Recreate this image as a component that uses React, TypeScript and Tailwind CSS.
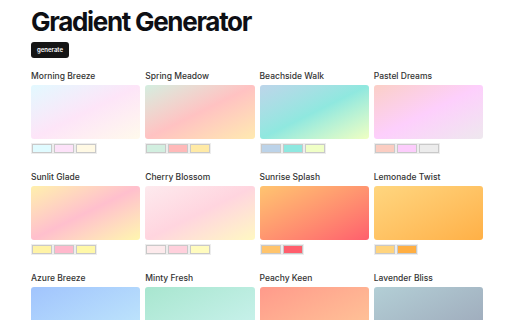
const gradients = [
  {
    name: 'Morning Breeze',
    bg: 'bg-linear-to-br from-[#e2f9ff] via-[#fde5f8] to-[#fffaec]',
    colors: ['bg-[#e0fbff]', 'bg-[#fde2f9]', 'bg-[#fff9e4]'],
  },
  {
    name: 'Spring Meadow',
    bg: 'bg-linear-to-br from-[#d3eee0] via-[#ffc2c2] to-[#ffeab0]',
    colors: ['bg-[#d2efe0]', 'bg-[#ffb9b9]', 'bg-[#ffeaa6]'],
  },
  {
    name: 'Beachside Walk',
    bg: 'bg-linear-to-br from-[#bdd5ea] via-[#8fe8df] to-[#efffc2]',
    colors: ['bg-[#bcd3e9]', 'bg-[#8ee8e0]', 'bg-[#f0ffc6]'],
  },
  {
    name: 'Pastel Dreams',
    bg: 'bg-linear-to-br from-[#fbcfc6] via-[#fdcffc] to-[#eee8ee]',
    colors: ['bg-[#fbcdc2]', 'bg-[#fccdfc]', 'bg-[#ececec]'],
  },
  {
    name: 'Sunlit Glade',
    bg: 'bg-linear-to-br from-[#fff0ac] via-[#ffbfcd] to-[#fff6ae]',
    colors: ['bg-[#fff3a6]', 'bg-[#ffb8cc]', 'bg-[#fff8a8]'],
  },
  {
    name: 'Cherry Blossom',
    bg: 'bg-linear-to-br from-[#fdeaee] via-[#ffd5df] to-[#fff8c2]',
    colors: ['bg-[#fdeaec]', 'bg-[#ffd0dc]', 'bg-[#fffbbe]'],
  },
  {
    name: 'Sunrise Splash',
    bg: 'bg-linear-to-br from-[#ffc470] to-[#ff5e6d]',
    colors: ['bg-[#ffc46c]', 'bg-[#ff5e6c]'],
  },
  {
    name: 'Lemonade Twist',
    bg: 'bg-linear-to-br from-[#ffd67f] to-[#ffb046]',
    colors: ['bg-[#ffd47e]', 'bg-[#ffae42]'],
  },
  {
    name: 'Azure Breeze',
    bg: 'bg-linear-to-br from-[#a1c4fd] to-[#c2e9fb]',
    colors: ['bg-[#a1c4fd]', 'bg-[#c2e9fb]'],
  },
  {
    name: 'Minty Fresh',
    bg: 'bg-linear-to-br from-[#a8e6cf] to-[#cdf3f0]',
    colors: ['bg-[#a8e6cf]', 'bg-[#cdf3f0]'],
  },
  {
    name: 'Peachy Keen',
    bg: 'bg-linear-to-br from-[#ff9a8b] to-[#ffc999]',
    colors: ['bg-[#ff9a8b]', 'bg-[#ffc999]'],
  },
  {
    name: 'Lavender Bliss',
    bg: 'bg-linear-to-br from-[#b3cfd6] to-[#9ca6b8]',
    colors: ['bg-[#b3cfd6]', 'bg-[#9ca6b8]'],
  },
]

export default function App() {
  return (
    <div className="min-h-screen bg-white font-['Inter',sans-serif]">
      <div className="ml-[31px] w-[452px] pt-[9px] pb-8">
        <h1 className="text-[26px] leading-[26px] font-bold tracking-[-0.05em] text-[#0e0f14]">
          Gradient Generator
        </h1>
        <button className="mt-[7px] block h-4 w-[38px] rounded-[3px] bg-[#151515] text-[6px] font-semibold leading-4 text-white">
          generate
        </button>

        <div className="mt-3 grid grid-cols-4 gap-x-[5px] gap-y-[17px]">
          {gradients.map((g) => (
            <div key={g.name}>
              <p className="text-[8.5px] leading-3 font-medium text-[#333]">{g.name}</p>
              <div className={`mt-[3px] h-[54px] rounded-[3px] ${g.bg}`} />
              <div className="mt-1 flex w-fit gap-[2px] bg-[#ededed] p-px">
                {g.colors.map((c, i) => (
                  <div key={i} className={`h-[9px] w-5 border border-[#c9c9c9] ${c}`} />
                ))}
              </div>
            </div>
          ))}
        </div>
      </div>
    </div>
  )
}
